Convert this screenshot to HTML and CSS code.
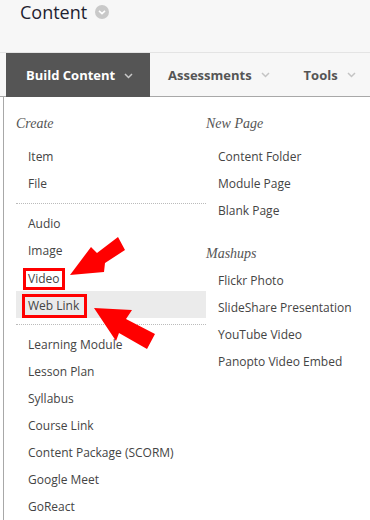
FILE: index.html
```html
<!DOCTYPE html>
<html>
<head>
<meta charset="utf-8">
<link rel="stylesheet" href="styles.css">
</head>
<body>
<div class="page">
  <header class="header">
    <h1 class="title">Content</h1>
    <span class="title-icon">
      <svg width="14" height="14" viewBox="0 0 14 14"><circle cx="7" cy="7" r="7" fill="#c9c9c9"/><path d="M4 5.8 L7 8.6 L10 5.8" fill="none" stroke="#fff" stroke-width="1.6"/></svg>
    </span>
  </header>
  <nav class="tabbar">
    <div class="tab tab-active">Build Content <svg class="chev" width="9" height="6" viewBox="0 0 9 6"><path d="M1 1 L4.5 4.5 L8 1" fill="none" stroke="#c8c8c8" stroke-width="1.5"/></svg></div>
    <div class="tab">Assessments <svg class="chev" width="9" height="6" viewBox="0 0 9 6"><path d="M1 1 L4.5 4.5 L8 1" fill="none" stroke="#c4c4c4" stroke-width="1.5"/></svg></div>
    <div class="tab">Tools <svg class="chev" width="9" height="6" viewBox="0 0 9 6"><path d="M1 1 L4.5 4.5 L8 1" fill="none" stroke="#c4c4c4" stroke-width="1.5"/></svg></div>
  </nav>
  <div class="panel">
    <div class="col col-left">
      <div class="heading">Create</div>
      <div class="item">Item</div>
      <div class="item">File</div>
      <div class="sep"></div>
      <div class="item">Audio</div>
      <div class="item">Image</div>
      <div class="item"><span class="mark mark-video">Video</span></div>
      <div class="item item-hover"><span class="mark mark-web">Web Link</span></div>
      <div class="sep"></div>
      <div class="item">Learning Module</div>
      <div class="item">Lesson Plan</div>
      <div class="item">Syllabus</div>
      <div class="item">Course Link</div>
      <div class="item">Content Package (SCORM)</div>
      <div class="item">Google Meet</div>
      <div class="item">GoReact</div>
    </div>
    <div class="col col-right">
      <div class="heading">New Page</div>
      <div class="item">Content Folder</div>
      <div class="item">Module Page</div>
      <div class="item">Blank Page</div>
      <div class="heading heading-2">Mashups</div>
      <div class="item">Flickr Photo</div>
      <div class="item">SlideShare Presentation</div>
      <div class="item">YouTube Video</div>
      <div class="item">Panopto Video Embed</div>
    </div>
  </div>
  <svg class="arrows" width="370" height="520" viewBox="0 0 370 520">
    <polygon points="70,275 91,247 97,253 118,237 125,250 105,263 104,272" fill="#ff0000"/>
    <polygon points="94,308 132,310 126,319 155,334 147,349 119,333 116,341" fill="#ff0000"/>
  </svg>
</div>
</body>
</html>
```
FILE: styles.css
```css
* { box-sizing: border-box; }
html, body { margin: 0; padding: 0; background: #fff; }
body { width: 370px; height: 520px; overflow: hidden; font-family: "Open Sans", "Liberation Sans", sans-serif; }
.page { position: relative; width: 370px; height: 520px; }
.header {
  height: 53px;
  background: #f7f7f7;
  border-bottom: 1px solid #e4e4e4;
  display: flex;
  align-items: flex-start;
  padding: 0 0 0 20px;
}
.title {
  margin: 0;
  font-weight: 400;
  font-size: 18px;
  line-height: 24px;
  color: #1e2230;
}
.title-icon { display: flex; margin: 5px 0 0 8px; }
.tabbar {
  display: flex;
  height: 44px;
  background: #f7f7f7;
  padding-left: 6px;
  border-bottom: 1px solid #a8a8a8;
  white-space: nowrap;
}
.tab {
  display: flex;
  flex-shrink: 0;
  align-items: center;
  height: 43px;
  padding: 0 16px 0 18px;
  font-size: 13px;
  font-weight: 700;
  color: #555;
  white-space: nowrap;
}
.tab-active {
  background: #555;
  color: #fff;
  height: 44px;
  padding: 0 16px 0 20px;
  min-width: 144px;
}
.chev { margin-left: 9px; margin-top: 1px; flex-shrink: 0; }
.panel {
  margin-left: 3px;
  border-left: 1px solid #a8a8a8;
  display: flex;
  padding: 17px 0 0 12px;
  height: 430px;
}
.col-left { width: 190px; }
.col-right { flex: 1; }
.heading {
  font-family: "Liberation Serif", "DejaVu Serif", serif;
  font-style: italic;
  font-size: 14px;
  line-height: 20px;
  color: #555;
  margin-bottom: 9px;
}
.heading-2 { margin-top: 20px; margin-bottom: 3px; }
.item {
  height: 27px;
  line-height: 27px;
  padding-left: 12px;
  font-size: 12px;
  color: #444;
  white-space: nowrap;
}
.item-hover { background: #ebebeb; }
.sep {
  border-bottom: 1px dotted #bbb;
  margin-bottom: 6px;
  height: 7px;
}
.mark {
  display: inline-block;
  border: 3px solid #ff0000;
  line-height: 16px;
  margin-left: -5px;
  padding: 0 3px 0 2px;
  vertical-align: middle;
}
.mark-web { margin-left: -6px; padding: 1px 5px 1px 3px; }
.arrows { position: absolute; left: 0; top: 0; pointer-events: none; }
```
